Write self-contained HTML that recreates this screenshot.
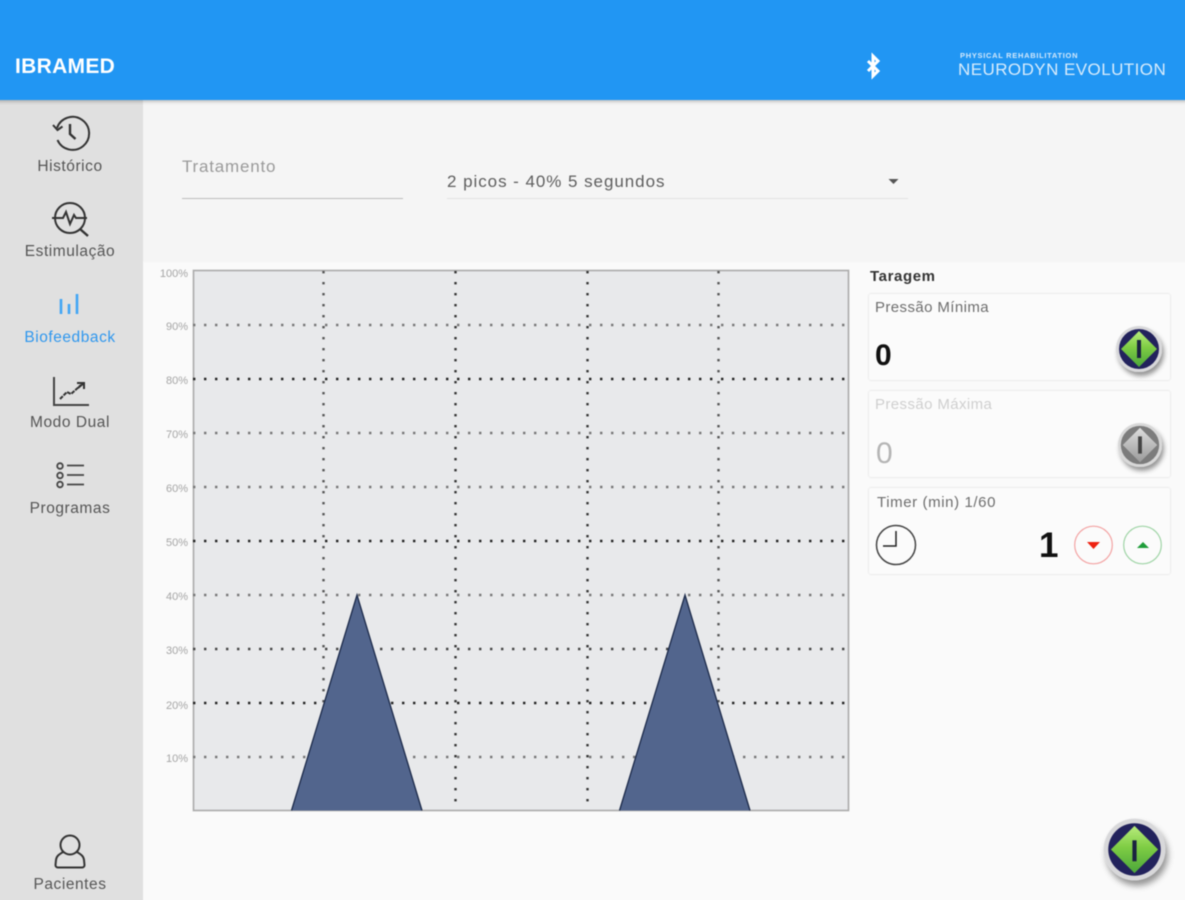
<!DOCTYPE html>
<html lang="pt"><head><meta charset="utf-8"><title>IBRAMED</title>
<style>
html,body{margin:0;padding:0;width:1185px;height:900px;overflow:hidden}
body{background:#fafafa;position:relative;font-family:"Liberation Sans",sans-serif;color:#555}
#clip{position:absolute;left:0;top:0;width:1185px;height:900px;overflow:hidden;contain:paint}
#wrap{position:absolute;left:0;top:0;width:1185px;height:900px;filter:blur(.45px)}
.a{position:absolute;white-space:nowrap}
#top{left:-8px;top:-8px;width:1201px;height:108px;background:#2196f3;box-shadow:0 1px 4px rgba(0,0,0,.3);z-index:3}
#side{left:-8px;top:100px;width:151px;height:808px;background:#e0e0e0}
#form{left:143px;top:100px;width:1050px;height:162px;background:#f5f5f5}
.nav{left:0;width:140px;text-align:center;font-size:15.5px;letter-spacing:.55px;color:#555}
.card{left:869px;width:301px;background:#fbfbfb;box-shadow:0 0 2px rgba(0,0,0,.16);border-radius:2px}
.lbl{font-size:15px;letter-spacing:.4px;color:#6e6e6e}
.num{font-size:30px;font-weight:bold;color:#111}
.ylab{left:150px;width:38px;text-align:right;font-size:11px;color:#a5a5a5}
svg{position:absolute;overflow:visible}
</style></head><body>
<div id="clip">
<div id="wrap">
<div class="a" id="top"></div>
<div class="a" id="side"></div>
<div class="a" id="form"></div>

<div class="a" style="left:15px;top:55px;font-size:21px;font-weight:bold;color:#fff;letter-spacing:.3px;z-index:4">IBRAMED</div>
<svg style="left:862px;top:54px;z-index:4" width="22" height="24" viewBox="0 0 22 24"><path d="M6 7l10 10-5 5V2l5 5L6 17" fill="none" stroke="#fff" stroke-width="3"/></svg>
<div class="a" style="left:960px;top:51px;font-size:7.5px;font-weight:bold;color:#d4e9fb;letter-spacing:.7px;z-index:4">PHYSICAL REHABILITATION</div>
<div class="a" style="left:958px;top:60px;font-size:17px;color:#d8ecfc;letter-spacing:.44px;z-index:4">NEURODYN EVOLUTION</div>

<!-- Sidebar -->
<svg style="left:50px;top:113px" width="40" height="40" viewBox="0 0 40 40" fill="none" stroke="#333" stroke-width="2"><path d="M7 15A16.500 16.500 0 1 1 7.500 27"/><path d="M3 12l4.500 5 5-3.500"/><path d="M20 11v10l5.500 5" stroke-width="2.400"/></svg>
<div class="a nav" style="top:158px">Histórico</div>
<svg style="left:50px;top:199px" width="40" height="40" viewBox="0 0 40 40" fill="none" stroke="#333" stroke-width="2"><circle cx="20" cy="19" r="15"/><path d="M2 19h11l3 -6 4 12 4-9 2 3h11"/><path d="M30 30l8 7" stroke-width="2.400"/></svg>
<div class="a nav" style="top:243px">Estimulação</div>
<svg style="left:50px;top:290px" width="40" height="30" viewBox="0 0 40 30" fill="none" stroke="#42a5f5" stroke-width="2.600"><path d="M11 9v15M19 14v10M27 4v20"/></svg>
<div class="a nav" style="top:329px;color:#2f97ee">Biofeedback</div>
<svg style="left:50px;top:372px" width="40" height="36" viewBox="0 0 40 36" fill="none" stroke="#333" stroke-width="2"><path d="M4 5v28h35" stroke="#444"/><path d="M10 27l7-7 4 2 10-9" stroke-dasharray="4 1"/><path d="M27 11h7v6" /><path d="M34 11l-6 5" /></svg>
<div class="a nav" style="top:414px">Modo Dual</div>
<svg style="left:50px;top:458px" width="40" height="36" viewBox="0 0 40 36" fill="none" stroke="#444" stroke-width="1.800"><circle cx="10" cy="8" r="2.800"/><circle cx="10" cy="17.500" r="2.800"/><circle cx="10" cy="26.500" r="2.800"/><path d="M17 7.500h17M17 17h17M17 26.500h17"/></svg>
<div class="a nav" style="top:500px">Programas</div>
<svg style="left:50px;top:832px" width="40" height="40" viewBox="0 0 40 40" fill="none" stroke="#333" stroke-width="2"><circle cx="20" cy="13" r="9.500"/><path d="M13 20c-3 2-6.500 3.500-7 8l-.5 5c0 1.500 1 2.500 2.500 2.500h24c1.500 0 2.500-1 2.500-2.500l-.5-5c-.5-4.500-4-6-7-8"/></svg>
<div class="a nav" style="top:876px">Pacientes</div>

<!-- Form -->
<div class="a" style="left:182px;top:157px;font-size:17px;letter-spacing:.8px;color:#9a9a9a">Tratamento</div>
<div class="a" style="left:182px;top:198px;width:221px;height:1px;background:#bdbdbd"></div>
<div class="a" style="left:447px;top:172px;font-size:17px;letter-spacing:.95px;color:#5e5e5e">2 picos - 40% 5 segundos</div>
<svg style="left:888px;top:178px" width="12" height="8"><path d="M0.500 1h10l-5 5z" fill="#555"/></svg>
<div class="a" style="left:447px;top:198px;width:461px;height:1px;background:#e2e2e2"></div>

<!-- Chart -->
<svg style="left:0;top:0" width="1185" height="900" viewBox="0 0 1185 900">
<rect x="193.500" y="270.500" width="655" height="540" fill="#e8e9eb" stroke="#aaa" stroke-width="1.600"/>
<g stroke-width="2.400" stroke-dasharray="2.400 8.600" fill="none">
<path stroke="#777" d="M193 325H849"/>
<path stroke="#222" d="M193 379H849"/>
<path stroke="#777" d="M193 433H849"/>
<path stroke="#777" d="M193 487H849"/>
<path stroke="#222" d="M193 541H849"/>
<path stroke="#777" d="M193 595H849"/>
<path stroke="#444" d="M193 649H849"/>
<path stroke="#222" d="M193 703H849"/>
<path stroke="#777" d="M193 757H849"/>
<path stroke="#555" d="M323.500 271V810"/>
<path stroke="#333" d="M455.500 271V810"/>
<path stroke="#333" d="M587.500 271V810"/>
<path stroke="#555" d="M718.500 271V810"/>
</g>
<path d="M291.500 810.500L357 595 422 810.500Z M619.500 810.500L685 595 750 810.500Z" fill="#52658d"/>
<path d="M291.500 810.500L357 595 422 810.500M619.500 810.500L685 595 750 810.500" fill="none" stroke="#1c2a4a" stroke-width="1.300"/>
</svg>
<div class="a ylab" style="top:268px">100%</div>
<div class="a ylab" style="top:321px">90%</div>
<div class="a ylab" style="top:375px">80%</div>
<div class="a ylab" style="top:429px">70%</div>
<div class="a ylab" style="top:483px">60%</div>
<div class="a ylab" style="top:537px">50%</div>
<div class="a ylab" style="top:591px">40%</div>
<div class="a ylab" style="top:645px">30%</div>
<div class="a ylab" style="top:700px">20%</div>
<div class="a ylab" style="top:753px">10%</div>

<!-- Right panel -->
<div class="a" style="left:870px;top:268px;font-size:15px;font-weight:bold;letter-spacing:.6px;color:#333">Taragem</div>

<div class="a card" style="top:294px;height:86px"></div>
<div class="a lbl" style="left:875px;top:299px">Pressão Mínima</div>
<div class="a num" style="left:875px;top:339px">0</div>

<div class="a card" style="top:391px;height:86px"></div>
<div class="a lbl" style="left:875px;top:396px;color:#cfcfcf">Pressão Máxima</div>
<div class="a num" style="left:876px;top:437px;color:#b5b5b5;font-weight:normal">0</div>

<div class="a card" style="top:488px;height:86px"></div>
<div class="a lbl" style="left:877px;top:494px;letter-spacing:.6px">Timer (min) 1/60</div>
<svg style="left:875px;top:524px" width="42" height="42" viewBox="0 0 42 42" fill="none" stroke="#444"><circle cx="21" cy="21" r="19.500" stroke-width="1.500"/><path d="M21 7v15H8" stroke="#222" stroke-width="1.500"/></svg>
<div class="a" style="left:1039px;top:526px;font-size:35px;font-weight:bold;color:#111">1</div>
<svg style="left:1074px;top:526px" width="40" height="38" viewBox="0 0 40 38"><circle cx="19.500" cy="19" r="18.800" fill="none" stroke="#f3a3a3" stroke-width="1.200"/><path d="M13 16h13l-6.500 7z" fill="#ee2211"/></svg>
<svg style="left:1123px;top:526px" width="40" height="38" viewBox="0 0 40 38"><circle cx="19.500" cy="19" r="18.800" fill="none" stroke="#9fd4a6" stroke-width="1.200"/><path d="M14 22h12l-6-6z" fill="#1f9d3a"/></svg>

<!-- Power buttons -->
<svg width="0" height="0" style="position:absolute"><defs>
<linearGradient id="g" x1="0" y1="0" x2="0" y2="1"><stop offset="0" stop-color="#b9ec7d"/><stop offset=".45" stop-color="#7fcd44"/><stop offset="1" stop-color="#4ba63a"/></linearGradient>
<linearGradient id="s" x1="0" y1="0" x2="0" y2="1"><stop offset="0" stop-color="#dedede"/><stop offset="1" stop-color="#9a9a9a"/></linearGradient>
<filter id="sh" x="-30%" y="-30%" width="170%" height="170%"><feDropShadow dx="2" dy="4" stdDeviation="2.500" flood-color="#000" flood-opacity=".4"/></filter>
</defs></svg>
<svg style="left:1115px;top:325px" width="48" height="48" viewBox="0 0 48 48"><g filter="url(#sh)"><circle cx="24" cy="24" r="23" fill="#d8d8da"/><circle cx="24" cy="24" r="20" fill="#23205c"/></g><path d="M24 6L42 24 24 42 6 24Z" fill="url(#g)"/><path d="M24 15v18" stroke="#1a2340" stroke-width="4"/></svg>
<svg style="left:1117px;top:422px" width="46" height="46" viewBox="0 0 48 48"><g filter="url(#sh)"><circle cx="24" cy="24" r="23" fill="#d8d8d8"/><circle cx="24" cy="24" r="20" fill="#7b7b7b"/></g><path d="M24 6L42 24 24 42 6 24Z" fill="url(#s)"/><path d="M24 15v18" stroke="#444" stroke-width="4"/></svg>
<svg style="left:1103px;top:818px" width="63" height="63" viewBox="0 0 48 48"><g filter="url(#sh)"><circle cx="24" cy="24" r="23.500" fill="#d8d8da"/><circle cx="24" cy="24" r="20" fill="#23205c"/></g><path d="M24 6L42 24 24 42 6 24Z" fill="url(#g)"/><path d="M24 17v16" stroke="#1a2340" stroke-width="3.200"/></svg>
</div>
</div>
</body></html>
